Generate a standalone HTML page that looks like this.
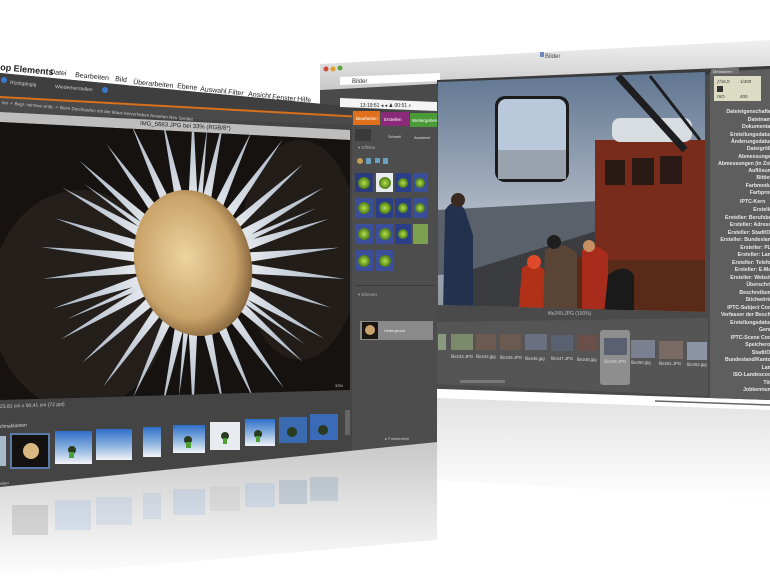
<!DOCTYPE html>
<html><head><meta charset="utf-8"><style>
html,body{margin:0;padding:0;background:#fff;width:770px;height:578px;overflow:hidden}
svg{display:block}
text{font-family:"Liberation Sans",sans-serif}
</style></head><body>
<svg width="770" height="578" viewBox="0 0 770 578" xmlns="http://www.w3.org/2000/svg">
<defs>
<linearGradient id="refl" x1="0" y1="0" x2="0" y2="1"><stop offset="0" stop-color="#c8c8c8"/><stop offset="1" stop-color="#fff"/></linearGradient>
<linearGradient id="refl2" x1="0" y1="0" x2="0" y2="1"><stop offset="0" stop-color="#d6d6d6"/><stop offset="1" stop-color="#fff"/></linearGradient>
<linearGradient id="title" x1="0" y1="0" x2="0" y2="1"><stop offset="0" stop-color="#f0f0f0"/><stop offset="1" stop-color="#c9c9c9"/></linearGradient>
<linearGradient id="sky" x1="0" y1="0" x2="0" y2="1"><stop offset="0" stop-color="#5f7590"/><stop offset=".55" stop-color="#aab4c2"/><stop offset="1" stop-color="#8f979f"/></linearGradient>
<radialGradient id="core" cx=".45" cy=".45" r=".6"><stop offset="0" stop-color="#ecd4a0"/><stop offset=".7" stop-color="#c9a36a"/><stop offset="1" stop-color="#7a5a35"/></radialGradient>
<linearGradient id="petal" x1="0" y1="1" x2="0" y2="0"><stop offset="0" stop-color="#f4f6f8"/><stop offset="1" stop-color="#a8b4c4"/></linearGradient>
<radialGradient id="ball" cx=".5" cy=".5" r=".5"><stop offset="0" stop-color="#b6e04a"/><stop offset="1" stop-color="#4b7a18"/></radialGradient>
<linearGradient id="snow" x1="0" y1="0" x2="0" y2="1"><stop offset="0" stop-color="#2f6fc8"/><stop offset=".55" stop-color="#8fb4e0"/><stop offset="1" stop-color="#f2f4f6"/></linearGradient>
<clipPath id="flowerclip"><polygon points="0,122 350,140 350,390 0,400"/></clipPath>
<clipPath id="boatclip"><polygon points="438,82 705,72 705,312 438,305"/></clipPath>
</defs>

<polygon points="437,398 770,410 770,500 437,480" fill="url(#refl2)" opacity=".7"/>
<polygon points="0,487 437,442 437,540 0,578" fill="url(#refl)"/>
<g opacity=".25">
<rect x="12" y="505" width="36" height="30" fill="#8a8a8a"/><rect x="55" y="500" width="36" height="30" fill="#8fb4e0"/><rect x="96" y="497" width="36" height="28" fill="#9fbbe0"/><rect x="143" y="493" width="18" height="26" fill="#9fbbe0"/><rect x="173" y="489" width="32" height="26" fill="#8fb4e0"/><rect x="210" y="486" width="30" height="25" fill="#bbb"/><rect x="245" y="483" width="30" height="24" fill="#8fb4e0"/><rect x="279" y="480" width="28" height="24" fill="#6a8ab0"/><rect x="310" y="477" width="28" height="24" fill="#6a8ab0"/>
</g>

<!-- RIGHT WINDOW -->
<polygon points="320,64 770,40 770,68 320,90" fill="url(#title)"/>
<circle cx="326" cy="69" r="2.5" fill="#d04a3a"/><circle cx="333" cy="69" r="2.5" fill="#e0a030"/><circle cx="340" cy="68" r="2.5" fill="#60a040"/>
<text x="545" y="58" font-size="6" fill="#444">Bilder</text>
<rect x="540" y="52" width="4" height="5" fill="#6a8ac0"/>
<polygon points="340,77 440,73 440,81 340,85" fill="#fff"/>
<text x="352" y="83" font-size="6" fill="#333">Bilder</text>
<polygon points="320,90 770,66 770,400 320,385" fill="#4a4a4a"/>
<polygon points="437,80 770,66 770,72 437,86" fill="#3a3a3a"/>
<g clip-path="url(#boatclip)">
<rect x="438" y="70" width="270" height="245" fill="url(#sky)"/>
<polygon points="438,210 705,195 705,260 438,275" fill="#5b616a"/>
<polygon points="470,270 600,230 640,250 620,320 470,320" fill="#3a3c40"/>
<polygon points="560,260 705,240 705,315 540,315" fill="#5a2a18"/>
<rect x="595" y="140" width="110" height="120" fill="#7a2c1c"/>
<rect x="605" y="160" width="20" height="25" fill="#2a1a16"/><rect x="632" y="158" width="22" height="27" fill="#2a1a16"/><rect x="660" y="156" width="22" height="28" fill="#2a1a16"/>
<rect x="612" y="118" width="80" height="24" rx="8" fill="#d8dde2"/>
<line x1="618" y1="76" x2="685" y2="150" stroke="#1e1e20" stroke-width="7"/>
<line x1="650" y1="76" x2="700" y2="140" stroke="#1e1e20" stroke-width="3"/>
<rect x="495" y="96" width="74" height="86" rx="10" fill="#1c1c1c"/>
<rect x="498" y="99" width="68" height="80" rx="8" fill="#b9c8da"/>
<rect x="498" y="150" width="68" height="29" fill="#9aa4ae"/>
<path d="M445 210 q10 -15 20 0 l8 25 l0 80 l-30 0 z" fill="#22324e"/>
<circle cx="458" cy="200" r="7" fill="#3a2a22"/>
<path d="M522 268 q13 -10 24 4 l4 45 l-32 0 z" fill="#b03018"/>
<circle cx="534" cy="262" r="7" fill="#e04a2a"/>
<path d="M545 250 q18 -12 32 4 l0 62 l-34 0 z" fill="#5a4436"/>
<circle cx="554" cy="242" r="7" fill="#1e1e1e"/>
<path d="M582 250 q13 -9 26 4 l0 55 l-26 0 z" fill="#a82c1c"/>
<circle cx="589" cy="246" r="6" fill="#c89060"/>
<path d="M608 275 q17 -13 26 0 l0 40 l-30 0z" fill="#1a1a1a"/>
</g>
<text x="548" y="315" font-size="5" fill="#bbb">file249.JPG (100%)</text>
<polygon points="437,322 708,318 708,396 437,384" fill="#555"/>
<rect x="600" y="330" width="30" height="55" rx="3" fill="#8e8e8e"/>
<g>
<rect x="438" y="334" width="8" height="16" fill="#8a9a80"/>
<rect x="451" y="334" width="22" height="16" fill="#7a8a6a"/>
<rect x="476" y="334" width="20" height="16" fill="#6a5a50"/>
<rect x="500" y="334" width="21" height="16" fill="#6a5a50"/>
<rect x="525" y="334" width="22" height="16" fill="#6a7080"/>
<rect x="551" y="335" width="22" height="16" fill="#5a6272"/>
<rect x="577" y="335" width="21" height="16" fill="#6a5048"/>
<rect x="604" y="338" width="23" height="17" fill="#5a6070"/>
<rect x="631" y="340" width="24" height="18" fill="#7a8090"/>
<rect x="659" y="341" width="24" height="18" fill="#7a6a64"/>
<rect x="687" y="342" width="20" height="18" fill="#8a94a4"/>
</g>
<g font-size="4.3" fill="#ddd">
<text x="451" y="358">file243.JPG</text><text x="476" y="358">file244.jpg</text><text x="500" y="359">file245.JPG</text><text x="525" y="360">file246.jpg</text><text x="551" y="360">file247.JPG</text><text x="577" y="361">file248.jpg</text><text x="604" y="363">file249.JPG</text><text x="631" y="364">file250.jpg</text><text x="659" y="365">file251.JPG</text><text x="687" y="366">file252.jpg</text>
</g>
<polygon points="460,380 505,380 505,383 460,383" fill="#777"/>
<line x1="655" y1="401" x2="770" y2="405" stroke="#666" stroke-width="1.5"/>
<polygon points="710,72 770,69 770,400 710,398" fill="#5e5e5e"/>
<rect x="711" y="68" width="28" height="6" fill="#6e6e6e"/>
<text x="713" y="73" font-size="4" fill="#ddd">Metadaten</text>
<rect x="714" y="76" width="47" height="25" fill="#dcdcc4"/>
<g font-size="4.5" fill="#333"><text x="717" y="83">ƒ/16,0</text><text x="740" y="83">1/400</text><text x="717" y="98">ISO</text><text x="740" y="98">400</text></g>
<rect x="717" y="86" width="6" height="6" fill="#333"/>
<g font-size="5.2" fill="#e8e8e8" text-anchor="end" font-weight="bold">
<text x="774" y="113">Dateieigenschaften</text><text x="774" y="121">Dateiname</text><text x="774" y="128">Dokumentart</text><text x="774" y="136">Erstellungsdatum</text><text x="774" y="143">Änderungsdatum</text><text x="774" y="150">Dateigröße</text><text x="774" y="158">Abmessungen</text><text x="774" y="165">Abmessungen (in Zoll)</text><text x="774" y="172">Auflösung</text><text x="774" y="179">Bittiefe</text><text x="774" y="187">Farbmodus</text><text x="774" y="194">Farbprofil</text>
<text x="740" y="203" text-anchor="start">IPTC-Kern</text>
<text x="774" y="211">Ersteller</text><text x="774" y="219">Ersteller: Berufsbez</text><text x="774" y="226">Ersteller: Adresse</text><text x="774" y="234">Ersteller: Stadt/Ort</text><text x="774" y="241">Ersteller: Bundesland</text><text x="774" y="249">Ersteller: PLZ</text><text x="774" y="256">Ersteller: Land</text><text x="774" y="264">Ersteller: Telefon</text><text x="774" y="271">Ersteller: E-Mail</text><text x="774" y="279">Ersteller: Website</text><text x="774" y="286">Überschrift</text><text x="774" y="294">Beschreibung</text><text x="774" y="301">Stichwörter</text><text x="774" y="309">IPTC-Subject Code</text><text x="774" y="316">Verfasser der Beschr.</text><text x="774" y="324">Erstellungsdatum</text><text x="774" y="331">Genre</text><text x="774" y="339">IPTC-Scene Code</text><text x="774" y="346">Speicherort</text><text x="774" y="354">Stadt/Ort</text><text x="774" y="361">Bundesland/Kanton</text><text x="774" y="369">Land</text><text x="774" y="376">ISO-Landescode</text><text x="774" y="384">Titel</text><text x="774" y="391">Jobkennung</text>
</g>

<!-- LEFT WINDOW -->
<polygon points="0,73 437,115 437,442 0,487" fill="#444444"/>
<polygon points="0,73 437,115 437,122 0,98" fill="#3f3f3f"/>
<polygon points="0,97 437,121 437,128 0,112" fill="#4a4a4a"/>
<g font-size="9" font-weight="bold" fill="#222">
<text transform="translate(0,70) rotate(5.5)">op Elements</text>
</g>
<g font-size="7" fill="#222">
<text transform="translate(50,74) rotate(5.5)">Datei</text>
<text transform="translate(75,77) rotate(5.5)">Bearbeiten</text>
<text transform="translate(115,81) rotate(5.5)">Bild</text>
<text transform="translate(133,84) rotate(5.5)">Überarbeiten</text>
<text transform="translate(177,88) rotate(5.5)">Ebene</text>
<text transform="translate(200,91) rotate(5.5)">Auswahl</text>
<text transform="translate(228,94) rotate(5.5)">Filter</text>
<text transform="translate(248,96) rotate(5.5)">Ansicht</text>
<text transform="translate(272,99) rotate(5.5)">Fenster</text>
<text transform="translate(297,101) rotate(5.5)">Hilfe</text>
</g>
<polygon points="340,98 437,102 437,111 340,107" fill="#f4f4f4"/>
<text x="360" y="107" font-size="5" fill="#222">13:19:51 ◂ ◂ ♟ 00:51 ⌕</text>
<g font-size="5" fill="#ccc">
<text transform="translate(10,84) rotate(5)">Rückgängig</text>
<text transform="translate(55,88) rotate(5)">Wiederherstellen</text>
</g>
<circle cx="4" cy="80" r="3" fill="#3a78c8"/><circle cx="105" cy="90" r="3" fill="#3a78c8"/>
<polygon points="0,96 437,120 437,122 0,98" fill="#d8701c"/>
<g font-size="4.5" fill="#ccc">
<text transform="translate(2,104) rotate(5)">ten ✓ Begr. nehmen entb. ✓ Beim Durchlaufen mit der Maus hervorheben   Ansehen   Neu   Sendet</text>
</g>
<polygon points="0,112 350,130 350,140 0,122" fill="#bdbdbd"/>
<text transform="translate(140,125) rotate(3.2)" font-size="6" fill="#222">IMG_5683.JPG bei 33% (RGB/8*)</text>
<g clip-path="url(#flowerclip)">
<rect x="0" y="110" width="360" height="300" fill="#15120f"/>
<ellipse cx="80" cy="300" rx="90" ry="110" fill="#241f1a"/>
<ellipse cx="300" cy="250" rx="60" ry="110" fill="#221d18"/>
<g fill="url(#petal)">
<polygon points="187,230 193,108 199,230" transform="rotate(0 193 263)"/>
<polygon points="187,230 193,112 199,230" transform="rotate(12 193 263)"/>
<polygon points="187,230 193,118 199,230" transform="rotate(24 193 263)"/>
<polygon points="187,230 193,110 199,230" transform="rotate(36 193 263)"/>
<polygon points="187,230 193,115 199,230" transform="rotate(48 193 263)"/>
<polygon points="187,230 193,112 199,230" transform="rotate(60 193 263)"/>
<polygon points="187,230 193,120 199,230" transform="rotate(72 193 263)"/>
<polygon points="187,230 193,116 199,230" transform="rotate(84 193 263)"/>
<polygon points="187,230 193,110 199,230" transform="rotate(96 193 263)"/>
<polygon points="187,230 193,118 199,230" transform="rotate(108 193 263)"/>
<polygon points="187,230 193,112 199,230" transform="rotate(120 193 263)"/>
<polygon points="187,230 193,115 199,230" transform="rotate(132 193 263)"/>
<polygon points="187,230 193,108 199,230" transform="rotate(144 193 263)"/>
<polygon points="187,230 193,110 199,230" transform="rotate(156 193 263)"/>
<polygon points="187,230 193,112 199,230" transform="rotate(168 193 263)"/>
<polygon points="187,230 193,108 199,230" transform="rotate(180 193 263)"/>
<polygon points="187,230 193,112 199,230" transform="rotate(192 193 263)"/>
<polygon points="187,230 193,115 199,230" transform="rotate(204 193 263)"/>
<polygon points="187,230 193,110 199,230" transform="rotate(216 193 263)"/>
<polygon points="187,230 193,114 199,230" transform="rotate(228 193 263)"/>
<polygon points="187,230 193,110 199,230" transform="rotate(240 193 263)"/>
<polygon points="187,230 193,116 199,230" transform="rotate(252 193 263)"/>
<polygon points="187,230 193,112 199,230" transform="rotate(264 193 263)"/>
<polygon points="187,230 193,110 199,230" transform="rotate(276 193 263)"/>
<polygon points="187,230 193,118 199,230" transform="rotate(288 193 263)"/>
<polygon points="187,230 193,112 199,230" transform="rotate(300 193 263)"/>
<polygon points="187,230 193,110 199,230" transform="rotate(312 193 263)"/>
<polygon points="187,230 193,116 199,230" transform="rotate(324 193 263)"/>
<polygon points="187,230 193,110 199,230" transform="rotate(336 193 263)"/>
<polygon points="187,230 193,114 199,230" transform="rotate(348 193 263)"/>
<polygon points="189,235 193,125 197,235" transform="rotate(6 193 263)"/>
<polygon points="189,235 193,128 197,235" transform="rotate(66 193 263)"/>
<polygon points="189,235 193,125 197,235" transform="rotate(126 193 263)"/>
<polygon points="189,235 193,128 197,235" transform="rotate(186 193 263)"/>
<polygon points="189,235 193,125 197,235" transform="rotate(246 193 263)"/>
<polygon points="189,235 193,128 197,235" transform="rotate(306 193 263)"/>
</g>
<ellipse cx="193" cy="263" rx="58" ry="74" fill="url(#core)" transform="rotate(-15 193 263)"/>
</g>
<text x="0" y="408" font-size="5" fill="#ccc" transform="rotate(-2 0 408)">23,81 cm x 80,41 cm (72 ppi)</text>
<text x="335" y="387" font-size="4" fill="#ccc">33%</text>
<polygon points="352,112 437,116 437,442 352,450" fill="#4d4d4d"/>
<rect x="353" y="111" width="27" height="14" fill="#e0701c"/>
<rect x="381" y="112" width="28" height="14" fill="#8a2a78"/>
<rect x="410" y="113" width="27" height="14" fill="#4a9a38"/>
<g font-size="4.5" fill="#fff"><text x="356" y="120">Bearbeiten</text><text x="384" y="121">Erstellen</text><text x="412" y="122">Weitergeben</text></g>
<g font-size="4" fill="#ddd"><text x="360" y="137">Voll</text><text x="388" y="138">Schnell</text><text x="414" y="139">Assistent</text></g>
<rect x="355" y="129" width="16" height="12" fill="#3a3a3a"/>
<text x="358" y="149" font-size="4.5" fill="#aaa">▾ Effekte</text>
<g fill="#6aa0c0"><circle cx="360" cy="161" r="3" fill="#c0a050"/><rect x="366" y="158" width="5" height="6"/><rect x="375" y="158" width="5" height="5"/><rect x="383" y="158" width="5" height="6"/></g>
<g>
<rect x="355" y="173" width="18" height="19" fill="#2a3a7a"/><rect x="376" y="173" width="17" height="19" fill="#e8ecf0"/><rect x="395" y="173" width="16" height="19" fill="#2a3e8a"/><rect x="413" y="173" width="15" height="19" fill="#3a4e9a"/>
<rect x="355" y="198" width="18" height="20" fill="#3a4e9a"/><rect x="376" y="198" width="17" height="20" fill="#2a3e8a"/><rect x="395" y="198" width="16" height="20" fill="#2a3e8a"/><rect x="413" y="198" width="15" height="20" fill="#3a4e9a"/>
<rect x="355" y="224" width="18" height="20" fill="#3a4e9a"/><rect x="376" y="224" width="17" height="20" fill="#3a4e9a"/><rect x="395" y="224" width="16" height="20" fill="#2a3e8a"/><rect x="413" y="224" width="15" height="20" fill="#7aa050"/>
<rect x="355" y="250" width="18" height="21" fill="#3a4e9a"/><rect x="376" y="250" width="17" height="21" fill="#3a4e9a"/>
</g>
<g fill="url(#ball)">
<circle cx="364" cy="183" r="6"/><circle cx="385" cy="183" r="6"/><circle cx="403" cy="183" r="5"/><circle cx="420" cy="183" r="5"/>
<circle cx="364" cy="208" r="6"/><circle cx="385" cy="208" r="6"/><circle cx="403" cy="208" r="5"/><circle cx="420" cy="208" r="5"/>
<circle cx="364" cy="234" r="6"/><circle cx="385" cy="234" r="6"/><circle cx="403" cy="234" r="5"/>
<circle cx="364" cy="261" r="6"/><circle cx="385" cy="261" r="6"/>
</g>
<text x="358" y="296" font-size="4.5" fill="#aaa">▾ Ebenen</text>
<rect x="355" y="285" width="80" height="1" fill="#3a3a3a"/>
<rect x="360" y="321" width="73" height="19" fill="#8a8a8a"/>
<rect x="362" y="322" width="16" height="17" fill="#1a1612"/><circle cx="370" cy="330" r="5" fill="#c9a36a"/>
<text x="384" y="332" font-size="4" fill="#eee">Hintergrund</text>
<text x="385" y="440" font-size="4" fill="#ccc">▸ Fotobereich</text>
<text transform="translate(0,428) rotate(-3)" font-size="5" fill="#ddd">chnaktionen</text>
<rect x="0" y="436" width="6" height="30" fill="#aab8cc"/>
<rect x="10" y="433" width="40" height="36" fill="#5a7aa8"/>
<rect x="12" y="435" width="36" height="32" fill="#141210"/><circle cx="31" cy="451" r="8" fill="#d8b880"/>
<rect x="55" y="431" width="37" height="33" fill="url(#snow)"/>
<rect x="96" y="429" width="36" height="31" fill="url(#snow)"/>
<rect x="143" y="427" width="18" height="30" fill="url(#snow)"/>
<rect x="173" y="425" width="32" height="28" fill="url(#snow)"/>
<rect x="210" y="422" width="30" height="28" fill="#e8ecf0"/>
<rect x="245" y="419" width="30" height="27" fill="url(#snow)"/>
<rect x="279" y="417" width="28" height="26" fill="#3a6ab0"/>
<rect x="310" y="414" width="28" height="26" fill="#3a6ab8"/>
<g fill="#2a3a20"><circle cx="72" cy="450" r="4"/><circle cx="188" cy="440" r="4"/><circle cx="225" cy="436" r="4"/><circle cx="258" cy="434" r="4"/><circle cx="292" cy="432" r="5"/><circle cx="323" cy="430" r="5"/></g>
<g fill="#4aa030"><rect x="69" y="452" width="5" height="6"/><rect x="186" y="442" width="5" height="6"/><rect x="223" y="438" width="4" height="6"/><rect x="256" y="436" width="4" height="6"/></g>
<rect x="345" y="410" width="5" height="25" fill="#666"/>
<text transform="translate(0,485) rotate(-5)" font-size="4" fill="#ccc">nden</text>
</svg>
</body></html>
